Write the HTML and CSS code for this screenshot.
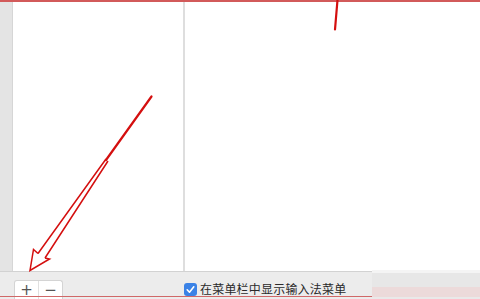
FILE: index.html
```html
<!DOCTYPE html>
<html>
<head>
<meta charset="utf-8">
<link rel="stylesheet" href="styles.css">
</head>
<body>
<div class="window">
  <div class="top-rule"></div>
  <div class="main">
    <div class="strip"></div>
    <div class="list"></div>
    <div class="detail"></div>
  </div>
  <div class="footer">
    <div class="seg">
      <span class="btn">+</span>
      <span class="btn">−</span>
    </div>
    <label class="check">
      <span class="box">
        <svg width="11" height="11" viewBox="0 0 11 11"><path d="M2.2 5.8 L4.5 8.2 L8.8 2.8" fill="none" stroke="#fff" stroke-width="1.6" stroke-linecap="round" stroke-linejoin="round"/></svg>
      </span>
      <span class="label">在菜单栏中显示输入法菜单</span>
    </label>
  </div>
  <div class="bottom-rule"></div>
  <div class="watermark"></div>
  <svg class="marks" width="480" height="299" viewBox="0 0 480 299">
    <path d="M151.5 96.5 L106 160" stroke="#d40f0f" stroke-width="2.2" fill="none" stroke-linecap="round"/>
    <path d="M106 159 L38 253.5 M108 161 L45 258" stroke="#d40f0f" stroke-width="1.5" fill="none"/>
    <path d="M38 253.5 L33.5 249.5 L30 270.5 L49.5 259 L45 258" stroke="#d40f0f" stroke-width="1.5" fill="none" stroke-linejoin="miter"/>
    <path d="M337.5 0 L335 29.5" stroke="#d40f0f" stroke-width="2.2" fill="none" stroke-linecap="round"/>
  </svg>
</div>
</body>
</html>
```
FILE: styles.css
```css
html, body {
  margin: 0;
  padding: 0;
}
body {
  width: 480px;
  height: 299px;
  overflow: hidden;
  background: #ececec;
  font-family: "Noto Sans CJK SC", "Noto Sans", sans-serif;
}
.window {
  position: relative;
  width: 480px;
  height: 299px;
  display: flex;
  flex-direction: column;
}
.top-rule {
  height: 2px;
  background: #d25a5a;
  flex: none;
}
.main {
  display: flex;
  height: 269px;
  flex: none;
  border-bottom: 1px solid #d2d2d2;
}
.strip {
  width: 12px;
  background: #e4e4e4;
  border-right: 1px solid #d6d6d6;
}
.list {
  width: 170px;
  background: #ffffff;
  border-right: 2px solid #dedede;
}
.detail {
  flex: 1;
  background: #ffffff;
}
.footer {
  display: flex;
  align-items: flex-start;
  padding-top: 8px;
  padding-left: 14px;
}
.seg {
  display: flex;
  width: 49px;
  height: 20px;
  background: #ffffff;
  border: 1px solid #d4d4d4;
  border-bottom: none;
  border-radius: 3px 3px 0 0;
  box-sizing: border-box;
}
.btn {
  width: 24px;
  height: 19px;
  display: flex;
  align-items: center;
  justify-content: center;
  font-family: "DejaVu Sans", sans-serif;
  font-size: 15px;
  color: #555;
  line-height: 1;
}
.btn + .btn {
  border-left: 1px solid #e0e0e0;
}
.check {
  display: flex;
  align-items: center;
  margin-left: 121px;
  margin-top: 2px;
  gap: 3px;
}
.box {
  width: 13px;
  height: 13px;
  border-radius: 3px;
  background: #3a82e6;
  display: flex;
  align-items: center;
  justify-content: center;
}
.label {
  font-size: 12px;
  letter-spacing: 0.2px;
  color: #2a2a2a;
  line-height: 14px;
}
.bottom-rule {
  position: absolute;
  left: 0;
  top: 296px;
  width: 372px;
  height: 1px;
  background: #d06868;
}
.watermark {
  position: absolute;
  left: 372px;
  top: 270px;
  width: 108px;
  height: 29px;
  background: linear-gradient(#f4f4f4 0, #f4f4f4 3px, #e7e7e7 3px, #e7e7e7 17px, #ecdada 17px, #ecdada 27px, #e9e9e9 27px);
}
.marks {
  position: absolute;
  left: 0;
  top: 0;
}
```
